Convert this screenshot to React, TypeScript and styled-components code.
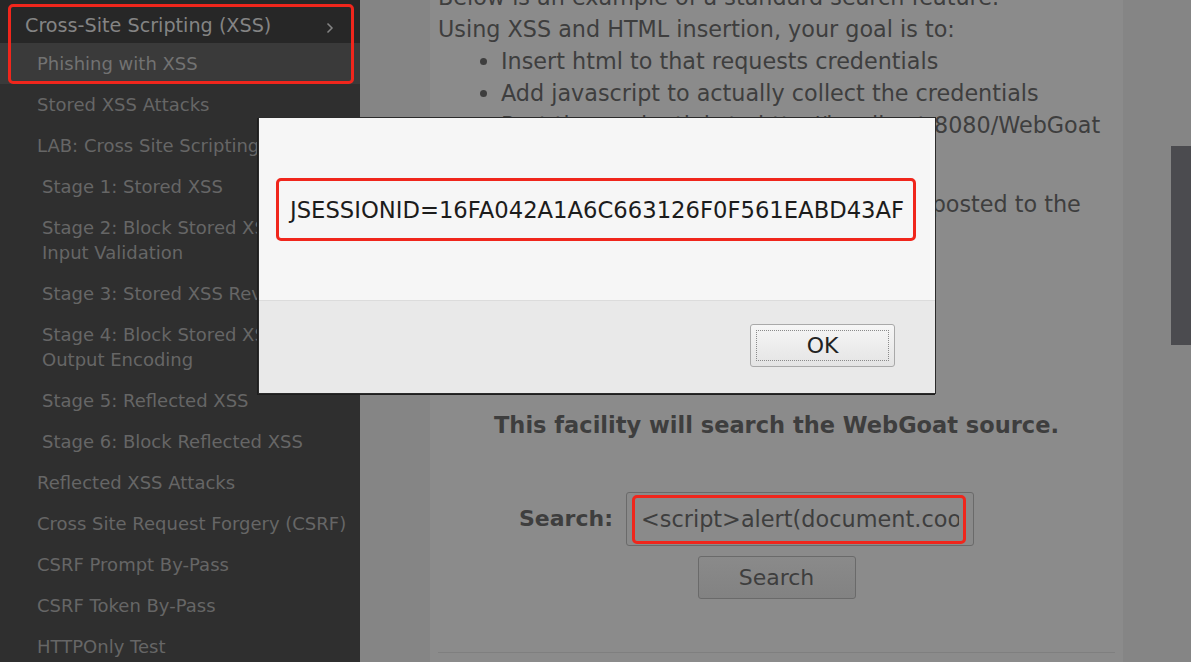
import React from 'react';
import styled, { createGlobalStyle } from 'styled-components';

const GlobalStyle = createGlobalStyle`
  html, body {
    margin: 0;
    padding: 0;
    width: 1191px;
    height: 662px;
    overflow: hidden;
    background: #858585;
  }
  body {
    font-family: "DejaVu Sans", "Liberation Sans", sans-serif;
  }
  #root {
    width: 1191px;
    height: 662px;
  }
`;

const Page = styled.div`
  position: relative;
  display: flex;
  width: 1191px;
  height: 662px;
  overflow: hidden;
`;

/* ---------- Sidebar ---------- */

const Sidebar = styled.nav`
  position: relative;
  width: 360px;
  flex: none;
  background: #2f2f2f;
  display: flex;
  flex-direction: column;
  overflow: hidden;
`;

const GroupHeader = styled.div`
  height: 43px;
  box-sizing: border-box;
  padding: 13px 26px 5px 25px;
  display: flex;
  align-items: center;
  justify-content: space-between;
  background: #272727;
  color: #848484;
  font-size: 19.2px;
  line-height: 25px;
  white-space: nowrap;
`;

const MenuItem = styled.div<{ $indent: number; $active?: boolean }>`
  padding: 8px 0 8px ${(p) => p.$indent}px;
  font-size: 18px;
  line-height: 25px;
  color: ${(p) => (p.$active ? '#727272' : '#666666')};
  background: ${(p) => (p.$active ? '#3a3a3a' : 'transparent')};
  white-space: nowrap;
`;

const Highlight = styled.div`
  position: absolute;
  left: 8px;
  top: 4px;
  width: 346px;
  height: 80px;
  box-sizing: border-box;
  border: 3px solid #f0261c;
  border-radius: 5px;
  pointer-events: none;
`;

/* ---------- Main ---------- */

const Main = styled.main`
  flex: 1;
  display: flex;
  background: #858585;
  padding-left: 70px;
`;

const Panel = styled.section`
  width: 693px;
  flex: none;
  box-sizing: border-box;
  padding: 0 8px;
  background: #8b8b8b;
  color: #3e3e3e;
  font-size: 22.3px;
  line-height: 32px;
  display: flex;
  flex-direction: column;
`;

const Intro = styled.div`
  margin-top: -19px;
`;

const Para = styled.p`
  margin: 0;
  white-space: nowrap;
`;

const Bullets = styled.ul`
  margin: 0 0 15px;
  padding-left: 63px;
  list-style: disc;
  white-space: nowrap;
`;

const Heading = styled.div`
  margin-top: 157px;
  text-align: center;
  font-weight: bold;
  font-size: 22.5px;
`;

const SearchForm = styled.form`
  margin: 51px 0 0;
  display: flex;
  flex-direction: column;
`;

const SearchRow = styled.div`
  display: flex;
  align-items: center;
  gap: 13px;
  padding-left: 81px;
`;

const Label = styled.label`
  font-weight: bold;
  font-size: 22px;
`;

const InputWrap = styled.div`
  position: relative;
  width: 348px;
  height: 54px;
`;

const TextInput = styled.input`
  width: 100%;
  height: 100%;
  box-sizing: border-box;
  border: 1px solid #6a6a6a;
  border-radius: 3px;
  background: #8a8a8a;
  padding: 0 14px;
  font-family: "DejaVu Sans", sans-serif;
  font-size: 22.4px;
  color: #3e3e3e;
  outline: none;
`;

const InputMark = styled.div`
  position: absolute;
  left: 6px;
  top: 3px;
  right: 8px;
  bottom: 2px;
  border: 3px solid #f0261c;
  border-radius: 5px;
  pointer-events: none;
`;

const SearchButton = styled.button`
  align-self: center;
  margin-top: 10px;
  width: 158px;
  height: 43px;
  border: 1px solid #6a6a6a;
  border-radius: 3px;
  background: linear-gradient(#8a8a8a, #828282);
  font-family: "DejaVu Sans", sans-serif;
  font-size: 22px;
  color: #3e3e3e;
  padding: 0;
`;

const Divider = styled.hr`
  margin: 53px 0 0;
  border: none;
  height: 1px;
  background: #7f7f7f;
`;

const ScrollTrack = styled.div`
  margin-left: auto;
  width: 20px;
  flex: none;
`;

const ScrollThumb = styled.div`
  margin-top: 146px;
  height: 199px;
  background: #4b4b4f;
`;

/* ---------- Dialog ---------- */

const Dialog = styled.div`
  position: absolute;
  left: 258px;
  top: 117px;
  width: 678px;
  height: 277px;
  box-sizing: border-box;
  border: 1px solid #2b2b2b;
  box-shadow: -1px 1px 0 #1e1e1e;
  background: #f6f6f6;
  display: flex;
  flex-direction: column;
`;

const DialogBody = styled.div`
  height: 183px;
  box-sizing: border-box;
  padding: 60px 19px 0 17px;
  border-bottom: 1px solid #dcdcdc;
`;

const Message = styled.div`
  height: 63px;
  box-sizing: border-box;
  border: 3px solid #f0261c;
  border-radius: 5px;
  padding-left: 11px;
  display: flex;
  align-items: center;
  font-size: 22.7px;
  color: #1c1c1c;
  white-space: nowrap;
`;

const DialogFooter = styled.div`
  flex: 1;
  background: #e9e9e9;
  display: flex;
  justify-content: flex-end;
  align-items: flex-start;
  padding: 23px 40px 0 0;
`;

const OkButton = styled.button`
  position: relative;
  width: 145px;
  height: 43px;
  border: 1px solid #a9a9a9;
  border-radius: 3px;
  background: linear-gradient(#f6f6f6, #e4e4e4);
  font-family: "DejaVu Sans", sans-serif;
  font-size: 22px;
  color: #222;
  padding: 0;
  &::after {
    content: '';
    position: absolute;
    inset: 5px;
    border: 1px dotted #8a8a8a;
  }
`;

const Chevron = () => (
  <svg width="8" height="12" viewBox="0 0 8 12" style={{ marginTop: 4 }}>
    <polyline points="1.5,1.5 6,6 1.5,10.5" fill="none" stroke="#848484" strokeWidth="1.5" />
  </svg>
);

type Item = { lines: string[]; indent: number; active?: boolean };

const items: Item[] = [
  { lines: ['Phishing with XSS'], indent: 37, active: true },
  { lines: ['Stored XSS Attacks'], indent: 37 },
  { lines: ['LAB: Cross Site Scripting'], indent: 37 },
  { lines: ['Stage 1: Stored XSS'], indent: 42 },
  { lines: ['Stage 2: Block Stored XSS using', 'Input Validation'], indent: 42 },
  { lines: ['Stage 3: Stored XSS Revisited'], indent: 42 },
  { lines: ['Stage 4: Block Stored XSS using', 'Output Encoding'], indent: 42 },
  { lines: ['Stage 5: Reflected XSS'], indent: 42 },
  { lines: ['Stage 6: Block Reflected XSS'], indent: 42 },
  { lines: ['Reflected XSS Attacks'], indent: 37 },
  { lines: ['Cross Site Request Forgery (CSRF)'], indent: 37 },
  { lines: ['CSRF Prompt By-Pass'], indent: 37 },
  { lines: ['CSRF Token By-Pass'], indent: 37 },
  { lines: ['HTTPOnly Test'], indent: 37 },
];

export default function App() {
  return (
    <>
      <GlobalStyle />
      <Page>
        <Sidebar>
          <GroupHeader>
            <span>Cross-Site Scripting (XSS)</span>
            <Chevron />
          </GroupHeader>
          {items.map((it, i) => (
            <MenuItem key={i} $indent={it.indent} $active={it.active}>
              {it.lines.map((l, j) => (
                <div key={j}>{l}</div>
              ))}
            </MenuItem>
          ))}
          <Highlight />
        </Sidebar>

        <Main>
          <Panel>
            <Intro>
              <Para>Below is an example of a standard search feature.</Para>
              <Para>Using XSS and HTML insertion, your goal is to:</Para>
              <Bullets>
                <li>Insert html to that requests credentials</li>
                <li>Add javascript to actually collect the credentials</li>
                <li>
                  Post the credentials to http://localhost:8080/WebGoat
                  <br />
                  catcher?PROPERTY=yes...
                </li>
              </Bullets>
              <Para>
                To pass this lesson, the credentials must be posted to the
                <br />
                catcher servlet.
              </Para>
            </Intro>

            <Heading>This facility will search the WebGoat source.</Heading>

            <SearchForm onSubmit={(e) => e.preventDefault()}>
              <SearchRow>
                <Label htmlFor="q">Search:</Label>
                <InputWrap>
                  <TextInput id="q" readOnly value="<script>alert(document.cookie)</script>" />
                  <InputMark />
                </InputWrap>
              </SearchRow>
              <SearchButton type="button">Search</SearchButton>
            </SearchForm>

            <Divider />
          </Panel>
          <ScrollTrack>
            <ScrollThumb />
          </ScrollTrack>
        </Main>

        <Dialog role="alertdialog">
          <DialogBody>
            <Message>JSESSIONID=16FA042A1A6C663126F0F561EABD43AF</Message>
          </DialogBody>
          <DialogFooter>
            <OkButton type="button">OK</OkButton>
          </DialogFooter>
        </Dialog>
      </Page>
    </>
  );
}
